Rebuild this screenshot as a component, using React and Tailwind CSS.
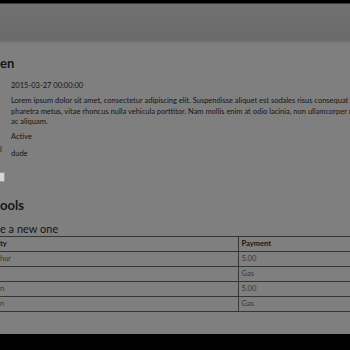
const rows = [
  { name: 'hur', pay: '5.00' },
  { name: '', pay: 'Gas' },
  { name: 'n', pay: '5.00' },
  { name: 'n', pay: 'Gas' },
];

export default function App() {
  return (
    <div className="w-[350px] h-[350px] overflow-hidden bg-black flex flex-col font-['Lato',sans-serif] text-[#151515]">
      <div className="h-[4px] bg-black border-b border-[#3a3a3a]" />
      <div className="h-[39px] bg-gradient-to-b from-[#717171] to-[#6a6a6a] border-b-2 border-[#777777]" />
      <div className="h-[291px] bg-[#7f7f7f] flex flex-col">
        <h2 className="mt-[11px] h-[18px] text-[13px] font-bold leading-[18px] whitespace-nowrap">en</h2>
        <div className="mt-[9px] pl-[11px] text-[7.5px] leading-[10.5px] whitespace-nowrap">
          <p className="h-[12px]">2015-03-27 00:00:00</p>
          <p className="mt-[3px]">Lorem ipsum dolor sit amet, consectetur adipiscing elit. Suspendisse aliquet est sodales risus consequat congue.</p>
          <p>pharetra metus, vitae rhoncus nulla vehicula porttitor. Nam mollis enim at odio lacinia, non ullamcorper nisl</p>
          <p>ac aliquam.</p>
          <p className="mt-[4px]">Active</p>
        </div>
        <div className="flex items-start mt-[3px] text-[7.5px] leading-[10.5px]">
          <span className="w-[11px]">l</span>
          <span className="pt-[4px]">dude</span>
        </div>
        <div className="mt-[12px] w-[5px] h-[10px] bg-[#d6d6d6] border border-[#9a9a9a] border-l-0" />
        <h2 className="mt-[14px] h-[18px] text-[13px] font-bold leading-[18px] whitespace-nowrap">ools</h2>
        <h3 className="mt-[8px] h-[14px] text-[11px] leading-[14px] whitespace-nowrap">e a new one</h3>
        <table className="w-[360px] border-collapse text-[7.5px] leading-[14px] table-fixed">
          <thead>
            <tr className="border-y border-[#363636]">
              <th className="w-[238px] text-left font-bold border-r border-[#363636]">ty</th>
              <th className="text-left font-bold pl-[3px]">Payment</th>
            </tr>
          </thead>
          <tbody className="text-[#363636]">
            {rows.map((r, i) => (
              <tr key={i} className="border-b border-[#363636]">
                <td className="border-r border-[#363636]">{r.name}</td>
                <td className="pl-[3px]">{r.pay}</td>
              </tr>
            ))}
          </tbody>
        </table>
      </div>
      <div className="flex-1 bg-black" />
    </div>
  );
}
